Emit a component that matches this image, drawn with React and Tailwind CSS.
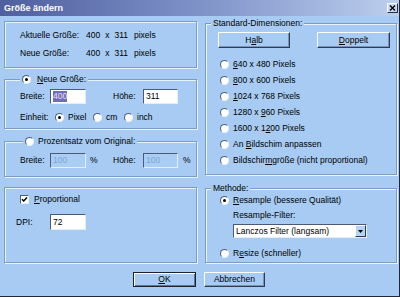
import React from "react";

function Radio({ checked }) {
  return (
    <span className="flex h-[9px] w-[9px] shrink-0 items-center justify-center rounded-full border border-t-[#4f5f7c] border-l-[#4f5f7c] border-r-[#e9f2fc] border-b-[#e9f2fc] bg-white">
      {checked && <span className="h-[3px] w-[3px] rounded-full bg-black" />}
    </span>
  );
}

function Check() {
  return (
    <span className="flex h-[9px] w-[9px] shrink-0 items-center justify-center border border-t-[#4f5f7c] border-l-[#4f5f7c] border-r-[#e9f2fc] border-b-[#e9f2fc] bg-white">
      <svg viewBox="0 0 7 7" className="h-[7px] w-[7px]" aria-hidden="true">
        <path d="M1 3.2 2.7 5 6 1.4" fill="none" stroke="#000" strokeWidth="1.5" />
      </svg>
    </span>
  );
}

function Field({ value, className = "", selected, disabled }) {
  return (
    <div
      className={`flex items-center border border-t-[#4b5a76] border-l-[#4b5a76] border-r-[#e4eefa] border-b-[#e4eefa] pl-[2px] ${
        disabled ? "bg-[#a9cdf3] text-[#7ca5d7]" : "bg-white"
      } ${className}`}
    >
      {selected ? (
        <span className="bg-[#6b6fb8] leading-[11px] text-[#f3dcf0]">{value}</span>
      ) : (
        <span>{value}</span>
      )}
    </div>
  );
}

function Btn({ children, className = "", isDefault }) {
  return (
    <div
      className={`flex items-center justify-center bg-[#a7cbf2] ${
        isDefault
          ? "border border-[#1c2230] shadow-[inset_1px_1px_0_#fff,inset_-1px_-1px_0_#5d7398]"
          : "border border-t-white border-l-white border-r-[#2f3b52] border-b-[#2f3b52] shadow-[inset_-1px_-1px_0_#7893bb]"
      } ${className}`}
    >
      {children}
    </div>
  );
}

function U({ children }) {
  return <span className="underline underline-offset-1">{children}</span>;
}

const groupCls =
  "m-0 border border-[#7c9cc8] p-0 shadow-[inset_1px_1px_0_#eaf3fd,1px_1px_0_#eaf3fd]";

function RadioRow({ children, checked }) {
  return (
    <div className="flex h-[16px] items-center gap-[4px] pl-[14px]">
      <Radio checked={checked} />
      <span>{children}</span>
    </div>
  );
}

export default function App() {
  return (
    <div className="flex h-[297px] w-[400px] flex-col overflow-hidden border-r border-b border-[#1f2738] bg-[#a7cbf2] font-['Liberation_Sans',Arial,sans-serif] text-[8.5px] leading-none text-black">
      <div className="flex h-[16px] shrink-0 items-center justify-between bg-gradient-to-r from-[#4f5f9f] via-[#7f92c8] to-[#bccfee] pl-[4px] pr-[1px]">
        <span className="text-[9px] font-bold text-white">Größe ändern</span>
        <div className="flex h-[10px] w-[11px] items-center justify-center border border-t-white border-l-white border-r-[#2a2f3a] border-b-[#2a2f3a] bg-[#c4d9f3]">
          <svg viewBox="0 0 7 6" className="h-[6px] w-[7px]" aria-hidden="true">
            <path d="M1 0.5 6 5.5M6 0.5 1 5.5" stroke="#000" strokeWidth="1.4" />
          </svg>
        </div>
      </div>

      <div className="flex gap-[8px] pl-[4px]">
        {/* left column */}
        <div className="flex w-[193px] flex-col pt-[5px]">
          <div className="border border-[#7c9cc8] pt-[4px] pb-[5px] pl-[15px] shadow-[inset_1px_1px_0_#eaf3fd,1px_1px_0_#eaf3fd]">
            <div className="flex h-[18px] items-center">
              <span className="w-[66px]">Aktuelle Größe:</span>
              <span>400</span>
              <span className="ml-[5px]">x</span>
              <span className="ml-[5px]">311</span>
              <span className="ml-[6px]">pixels</span>
            </div>
            <div className="flex h-[18px] items-center">
              <span className="w-[66px]">Neue Größe:</span>
              <span>400</span>
              <span className="ml-[5px]">x</span>
              <span className="ml-[5px]">311</span>
              <span className="ml-[6px]">pixels</span>
            </div>
          </div>

          <fieldset className={`mt-[5px] ${groupCls}`}>
            <legend className="ml-[15px] flex h-[12px] items-center gap-[6px] bg-[#a7cbf2] px-[2px]">
              <Radio checked />
              <span>
                <U>N</U>eue Größe:
              </span>
            </legend>
            <div className="pt-[4px] pb-[4px] pl-[15px]">
              <div className="flex h-[15px] items-center">
                <span className="w-[30px]">Breite:</span>
                <Field value="400" selected className="h-[15px] w-[36px]" />
                <span className="ml-[27px] w-[30px]">Höhe:</span>
                <Field value="311" className="h-[15px] w-[35px]" />
              </div>
              <div className="mt-[6px] flex h-[14px] items-center">
                <span className="w-[35px]">Einheit:</span>
                <Radio checked />
                <span className="ml-[4px] w-[25px]">Pixel</span>
                <Radio />
                <span className="ml-[4px] w-[18px]">cm</span>
                <Radio />
                <span className="ml-[4px]">inch</span>
              </div>
            </div>
          </fieldset>

          <fieldset className={`mt-[6px] ${groupCls}`}>
            <legend className="ml-[18px] flex h-[12px] items-center gap-[4px] bg-[#a7cbf2] px-[2px]">
              <Radio />
              <span>Prozentsatz vom Original:</span>
            </legend>
            <div className="pt-[6px] pb-[8px] pl-[15px]">
              <div className="flex h-[15px] items-center">
                <span className="w-[30px]">Breite:</span>
                <Field value="100" disabled className="h-[15px] w-[36px]" />
                <span className="ml-[4px] w-[23px]">%</span>
                <span className="w-[30px]">Höhe:</span>
                <Field value="100" disabled className="h-[15px] w-[35px]" />
                <span className="ml-[5px]">%</span>
              </div>
            </div>
          </fieldset>

          <div className="mt-[10px] h-[76px] border border-[#7c9cc8] pt-[5px] shadow-[inset_1px_1px_0_#eaf3fd,1px_1px_0_#eaf3fd]">
            <div className="flex h-[12px] items-center gap-[5px] pl-[15px]">
              <Check />
              <span>
                <U>P</U>roportional
              </span>
            </div>
            <div className="mt-[9px] flex h-[16px] items-center pl-[11px]">
              <span className="w-[34px]">DPI:</span>
              <Field value="72" className="h-[16px] w-[36px]" />
            </div>
          </div>
        </div>

        {/* right column */}
        <div className="flex w-[192px] flex-col pt-[1px]">
          <fieldset className={groupCls}>
            <legend className="ml-[5px] flex h-[12px] items-center bg-[#a7cbf2] px-[2px]">
              Standard-Dimensionen:
            </legend>
            <div className="pt-[3px] pb-[6px]">
              <div className="flex pl-[12px]">
                <Btn className="h-[16px] w-[72px]">
                  <span>
                    H<U>a</U>lb
                  </span>
                </Btn>
                <Btn className="ml-[27px] h-[16px] w-[73px]">
                  <span>
                    <U>D</U>oppelt
                  </span>
                </Btn>
              </div>
              <div className="mt-[8px]">
                <RadioRow>
                  <U>6</U>40 x 480 Pixels
                </RadioRow>
                <RadioRow>
                  <U>8</U>00 x 600 Pixels
                </RadioRow>
                <RadioRow>
                  <U>1</U>024 x 768 Pixels
                </RadioRow>
                <RadioRow>
                  1280 x <U>9</U>60 Pixels
                </RadioRow>
                <RadioRow>
                  1600 x 1<U>2</U>00 Pixels
                </RadioRow>
                <RadioRow>
                  An <U>B</U>ildschim anpassen
                </RadioRow>
                <RadioRow>
                  Bildschir<U>m</U>größe (nicht proportional)
                </RadioRow>
              </div>
            </div>
          </fieldset>

          <fieldset className={`mt-[7px] ${groupCls}`}>
            <legend className="ml-[5px] flex h-[12px] items-center bg-[#a7cbf2] px-[2px]">
              Methode:
            </legend>
            <div className="pb-[3px]">
              <div className="flex h-[12px] items-center gap-[4px] pl-[14px]">
                <Radio checked />
                <span>
                  <U>R</U>esample (bessere Qualität)
                </span>
              </div>
              <div className="mt-[3px] flex h-[12px] items-center pl-[27px]">
                Resample-Filter:
              </div>
              <div className="mt-[3px] ml-[27px] flex h-[14px] w-[134px] items-center justify-between border border-t-[#4b5a76] border-l-[#4b5a76] border-r-[#e4eefa] border-b-[#e4eefa] bg-white pl-[2px]">
                <span>Lanczos Filter (langsam)</span>
                <div className="flex h-[12px] w-[11px] items-center justify-center border border-t-white border-l-white border-r-[#2f3b52] border-b-[#2f3b52] bg-[#b5d3f4]">
                  <svg viewBox="0 0 5 3" className="h-[3px] w-[5px]" aria-hidden="true">
                    <path d="M0 0h5L2.5 3z" fill="#000" />
                  </svg>
                </div>
              </div>
              <div className="mt-[9px] flex h-[12px] items-center gap-[4px] pl-[14px]">
                <Radio />
                <span>
                  R<U>e</U>size (schneller)
                </span>
              </div>
            </div>
          </fieldset>
        </div>
      </div>

      <div className="mt-[9px] flex justify-center gap-[8px] pr-[1px]">
        <Btn isDefault className="h-[15px] w-[63px]">
          <span>
            <U>O</U>K
          </span>
        </Btn>
        <Btn className="h-[15px] w-[61px]">
          <span>Abbrechen</span>
        </Btn>
      </div>
    </div>
  );
}
